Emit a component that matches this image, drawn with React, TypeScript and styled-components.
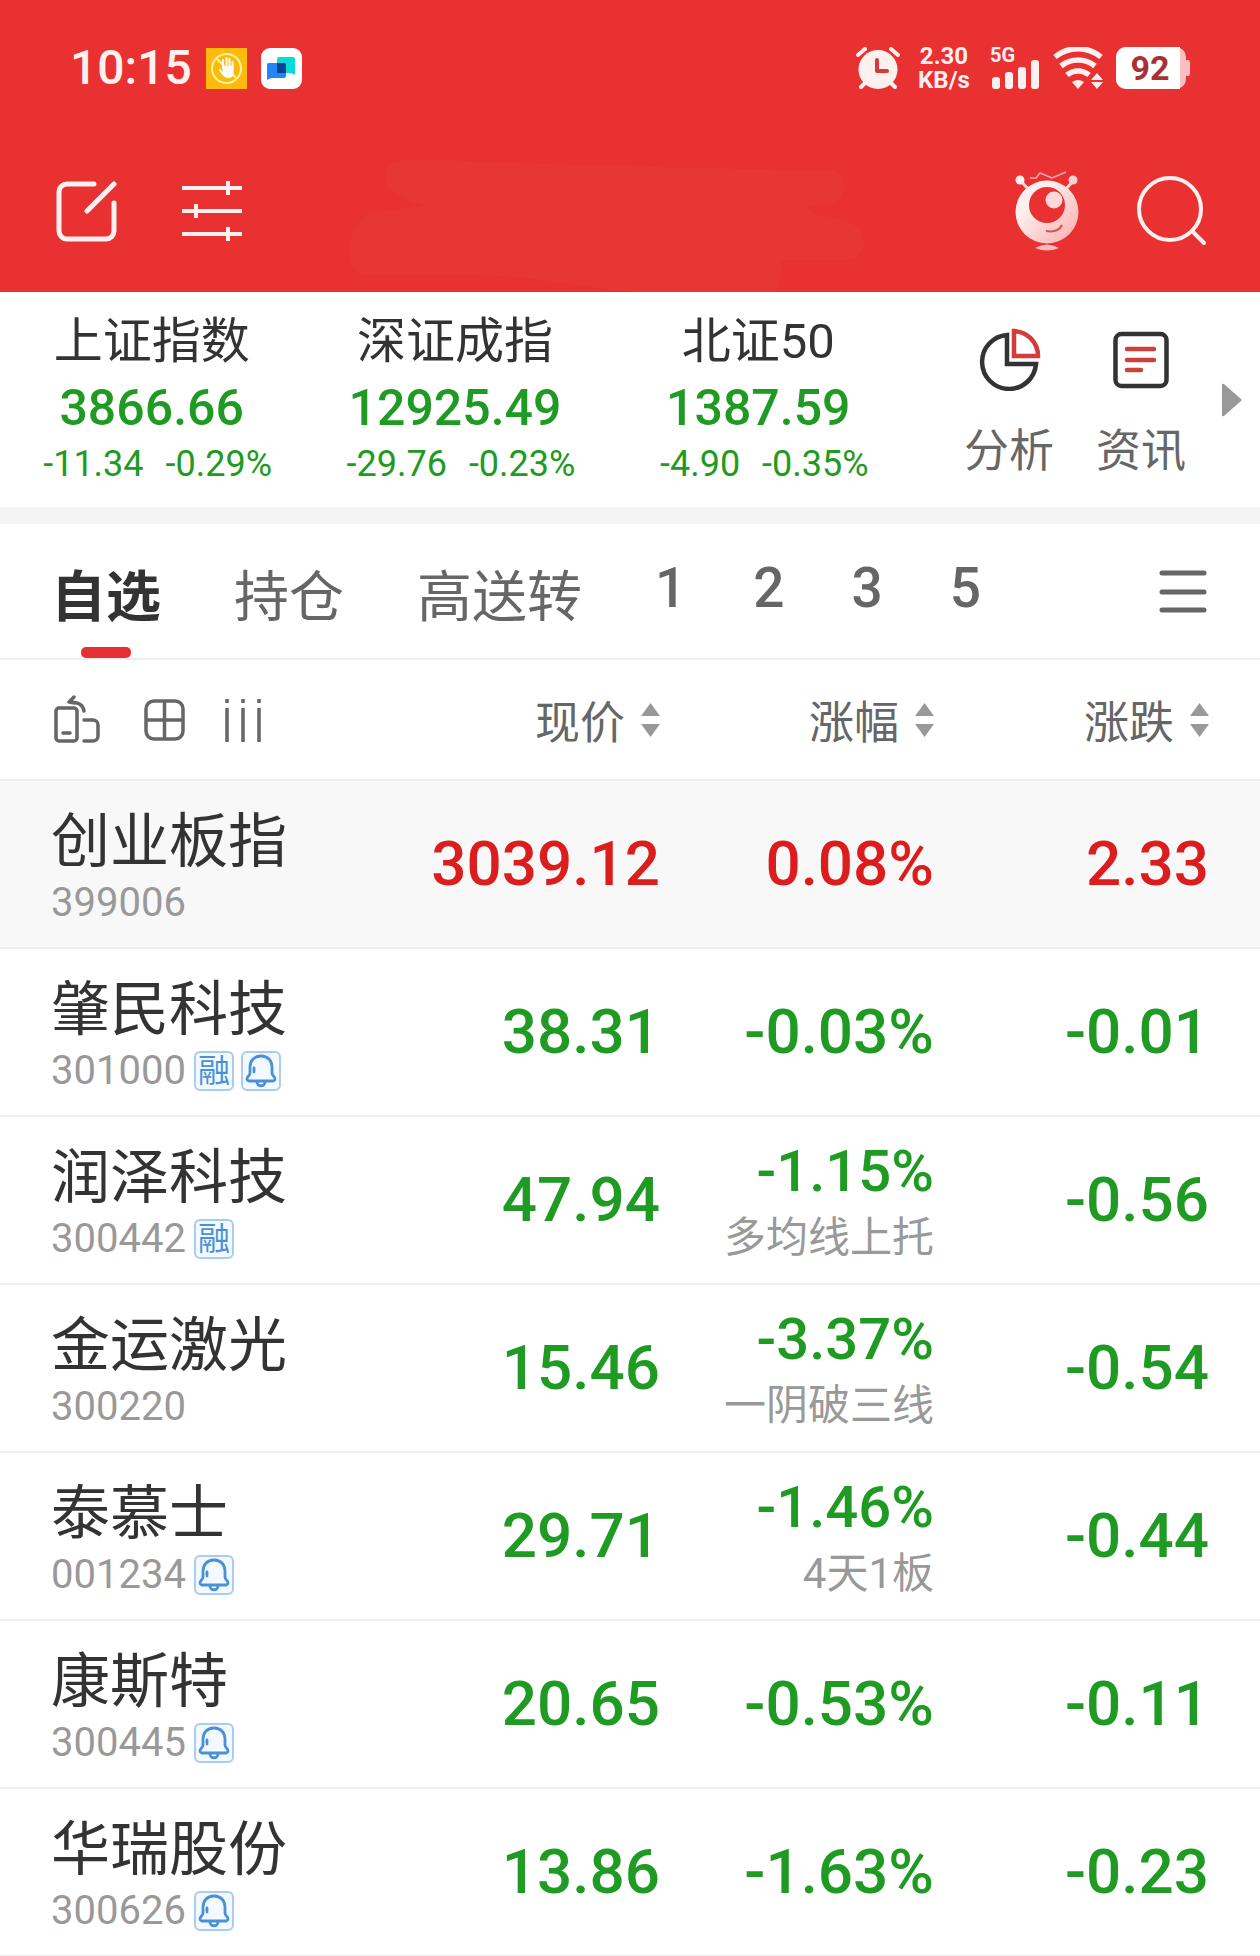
import React from 'react';
import styled, { createGlobalStyle } from 'styled-components';

const Global = createGlobalStyle`
  * { box-sizing: border-box; }
  body { margin: 0; background: #fff; font-family: 'Noto Sans CJK SC', 'Noto Sans', sans-serif; color: #333; }
  button { border: 0; padding: 0; background: none; font: inherit; color: inherit; cursor: pointer; }
  svg { display: block; flex: none; }
`;

const NUMERIC = "Roboto, 'Noto Sans CJK SC', sans-serif";
const RED = '#e83130';
const UP = '#dc1d1d';
const DOWN = '#1f9a22';

const Header = styled.header`
  position: relative;
  background: ${RED};
  color: #fff0f0;
  font-family: ${NUMERIC};
`;
const HeaderGlow = styled.svg`
  position: absolute;
  left: 50%;
  bottom: 0;
  margin-left: -290px;
  pointer-events: none;
`;
const StatusBar = styled.div`
  height: 136px;
  padding: 0 70px;
  display: flex;
  align-items: center;
  justify-content: space-between;
`;
const StatusGroup = styled.div<{ $gap: number }>`
  display: flex;
  align-items: center;
  gap: ${p => p.$gap}px;
`;
const Clock = styled.time`
  font-size: 48px;
  line-height: 48px;
  font-weight: 500;
`;
const Speed = styled.div`
  width: 52px;
  margin: 0 8px 0 6px;
  font-size: 24px;
  line-height: 24px;
  font-weight: 700;
  text-align: center;
`;
const Network = styled.div`
  position: relative;
  width: 50px;
  height: 42px;
`;
const NetworkLabel = styled.span`
  position: absolute;
  left: 0;
  top: -2px;
  font-size: 20px;
  line-height: 20px;
  font-weight: 700;
`;
const Battery = styled.div`
  position: relative;
  width: 74px;
  height: 42px;
`;
const BatteryLabel = styled.span`
  position: absolute;
  left: 0;
  top: 0;
  width: 68px;
  text-align: center;
  font-size: 34px;
  line-height: 42px;
  font-weight: 700;
  color: #a83232;
`;
const Toolbar = styled.nav`
  position: relative;
  height: 156px;
  padding: 0 53px 6px 56px;
  display: flex;
  align-items: center;
  justify-content: space-between;
`;
const ToolGroup = styled.div<{ $gap: number }>`
  display: flex;
  align-items: center;
  gap: ${p => p.$gap}px;
`;

const Indices = styled.section`
  height: 232px;
  border-bottom: 17px solid #f4f4f4;
  display: flex;
  align-items: flex-start;
  padding-right: 18px;
`;
const IndexList = styled.div`
  flex: 1;
  display: grid;
  grid-template-columns: repeat(3, 1fr);
  padding-right: 54px;
  font-family: ${NUMERIC};
`;
const IndexCard = styled.div`
  display: flex;
  flex-direction: column;
  align-items: center;
  padding-top: 20px;
  white-space: nowrap;
`;
const IndexName = styled.div`
  font-size: 49px;
  line-height: 60px;
`;
const IndexValue = styled.div`
  font-size: 50px;
  line-height: 72px;
  font-weight: 500;
  color: ${DOWN};
`;
const IndexChange = styled.div`
  display: flex;
  gap: 22px;
  padding-left: 12px;
  font-size: 36px;
  line-height: 40px;
  color: ${DOWN};
`;
const Shortcuts = styled.div`
  display: flex;
  padding-top: 35px;
  gap: 42px;
  margin-right: 36px;
`;
const Shortcut = styled.button`
  display: flex;
  flex-direction: column;
  align-items: center;
  gap: 27px;
  font-size: 45px;
  line-height: 60px;
  color: #666;
`;
const NextButton = styled.button`
  align-self: center;
`;

const Tabs = styled.nav`
  height: 136px;
  padding: 0 53px 0 51px;
  border-bottom: 2px solid #eee;
  display: flex;
  justify-content: space-between;
  align-items: center;
`;
const TabList = styled.div`
  align-self: stretch;
  display: flex;
  gap: 73px;
`;
const Tab = styled.button<{ $active?: boolean }>`
  position: relative;
  font-size: 55px;
  line-height: 80px;
  padding-top: 2px;
  color: ${p => (p.$active ? '#333' : '#666')};
  font-weight: ${p => (p.$active ? 700 : 400)};
  &::after {
    content: '';
    display: ${p => (p.$active ? 'block' : 'none')};
    position: absolute;
    left: 50%;
    bottom: 0;
    width: 50px;
    height: 11px;
    margin-left: -25px;
    border-radius: 5px;
    background: #e62f33;
  }
`;
const NumberTabs = styled.div`
  display: flex;
  gap: 67px;
`;
const NumberTab = styled(Tab)`
  font-family: ${NUMERIC};
  font-weight: 500;
  padding: 0 0 6px;
`;

const Table = styled.table`
  width: 100%;
  table-layout: fixed;
  border-collapse: collapse;
`;
const NameCol = styled.col``;
const PriceCol = styled.col`
  width: 240px;
`;
const RateCol = styled.col`
  width: 274px;
`;
const DiffCol = styled.col`
  width: 326px;
`;
const HeadRow = styled.tr`
  height: 120px;
  border-bottom: 2px solid #eee;
`;
const HeadCell = styled.th<{ $end?: boolean }>`
  padding: 0 ${p => (p.$end ? 51 : 0)}px 0 0;
  font-weight: 400;
`;
const ViewTools = styled.div`
  display: flex;
  align-items: center;
  gap: 40px;
  padding-left: 54px;
`;
const SortButton = styled.button`
  display: flex;
  width: 100%;
  align-items: center;
  justify-content: flex-end;
  gap: 16px;
  font-size: 45px;
  line-height: 62px;
  color: #666;
`;
const Row = styled.tr<{ $tinted?: boolean }>`
  height: 168px;
  border-bottom: 2px solid #eee;
  background: ${p => (p.$tinted ? '#f8f8f8' : '#fff')};
`;
const NameCell = styled.th`
  padding: 0 0 0 51px;
  text-align: left;
  font-weight: 400;
  white-space: nowrap;
`;
const StockName = styled.div`
  font-size: 59px;
  line-height: 72px;
  margin-bottom: 6px;
`;
const CodeLine = styled.div`
  display: flex;
  align-items: center;
  height: 48px;
  gap: 7px;
`;
const Code = styled.span`
  margin-right: 1px;
  font-family: ${NUMERIC};
  font-size: 40px;
  line-height: 48px;
  color: #999;
`;
const Badge = styled.span`
  width: 40px;
  height: 40px;
  display: flex;
  align-items: center;
  justify-content: center;
  border: 2px solid #a9cdf0;
  border-radius: 6px;
  background: #f3faff;
  color: #4a90d9;
  font-family: ${NUMERIC};
  font-size: 32px;
  line-height: 42px;
`;
const NumCell = styled.td<{ $up?: boolean; $end?: boolean }>`
  padding: 0 ${p => (p.$end ? 51 : 0)}px 0 0;
  text-align: right;
  white-space: nowrap;
  font-family: ${NUMERIC};
  font-size: 62px;
  line-height: 80px;
  font-weight: 500;
  color: ${p => (p.$up ? UP : DOWN)};
`;
const RateWithNote = styled.div`
  padding-top: 8px;
  font-size: 58px;
  line-height: 68px;
`;
const Note = styled.div`
  font-size: 42px;
  line-height: 66px;
  font-weight: 400;
  color: #999;
`;

const SortIcon = () => (
  <svg width="19" height="34" viewBox="0 0 19 34" fill="#999"><path d="M9.500 0 19 13H0zM9.500 34 19 21H0z" /></svg>
);
const Bell = () => (
  <svg width="32" height="34" viewBox="0 0 32 34" fill="none" stroke="#4a90d9" strokeWidth="2.800" strokeLinecap="round" strokeLinejoin="round">
    <path d="M16 2C9 2 5 7 5 13v6c0 3-3 3-3 6 0 1 1 2 2 2h24c1 0 2-1 2-2 0-3-3-3-3-6v-6c0-6-4-11-11-11zM12 28c0 5 8 5 8 0M9 14v4" />
  </svg>
);

type Stock = { name: string; code: string; margin?: boolean; bell?: boolean; price: string; rate: string; diff: string; note?: string; up?: boolean };
const stocks: Stock[] = [
  { name: '创业板指', code: '399006', price: '3039.12', rate: '0.08%', diff: '2.33', up: true },
  { name: '肇民科技', code: '301000', margin: true, bell: true, price: '38.31', rate: '-0.03%', diff: '-0.01' },
  { name: '润泽科技', code: '300442', margin: true, price: '47.94', rate: '-1.15%', diff: '-0.56', note: '多均线上托' },
  { name: '金运激光', code: '300220', price: '15.46', rate: '-3.37%', diff: '-0.54', note: '一阴破三线' },
  { name: '泰慕士', code: '001234', bell: true, price: '29.71', rate: '-1.46%', diff: '-0.44', note: '4天1板' },
  { name: '康斯特', code: '300445', bell: true, price: '20.65', rate: '-0.53%', diff: '-0.11' },
  { name: '华瑞股份', code: '300626', bell: true, price: '13.86', rate: '-1.63%', diff: '-0.23' },
];
const indices = [
  { name: '上证指数', value: '3866.66', diff: '-11.34', rate: '-0.29%' },
  { name: '深证成指', value: '12925.49', diff: '-29.76', rate: '-0.23%' },
  { name: '北证50', value: '1387.59', diff: '-4.90', rate: '-0.35%' },
];

export default function App() {
  return (
    <>
      <Global />
      <Header>
        <HeaderGlow width="530" height="142" viewBox="0 0 530 142" fill="#e83733" aria-hidden="true">
          <path d="M60 10C120 8 160 16 490 20Q504 22 504 38 502 54 484 54L466 56Q470 66 492 67 522 72 524 92 522 110 506 110H442Q440 132 436 142H300C240 138 200 126 130 125H24Q8 122 10 98 12 68 34 62L84 56C50 44 46 36 46 26Q48 12 60 10z" />
        </HeaderGlow>
        <StatusBar>
          <StatusGroup $gap={14}>
            <Clock>10:15</Clock>
            <svg width="41" height="41" viewBox="0 0 41 41">
              <rect width="41" height="41" fill="#fcba0c" />
              <circle cx="20.500" cy="20.500" r="14.500" fill="none" stroke="#fff3a0" strokeWidth="2" />
              <path d="M10 10 31 31" stroke="#fff3a0" strokeWidth="2" />
              <path d="M17 20v-8M20.500 19V10M23.500 19v-8M26.500 21v-7M14 22l4 5" stroke="#fff" strokeWidth="2" strokeLinecap="round" />
              <path d="M16 18h11.500v6c0 4-2 6-5 6-4 0-6-3-9-7 1-1 2-1 3.500 1z" fill="#fff" />
            </svg>
            <svg width="41" height="41" viewBox="0 0 41 41">
              <rect width="41" height="41" rx="9" fill="#fff" />
              <path d="M18 9h14a2 2 0 0 1 2 2v16l-4-2H16V11a2 2 0 0 1 2-2z" fill="#0bdadd" />
              <path d="M7 15h16a2 2 0 0 1 2 2v11a2 2 0 0 1-2 2H10l-4 2V16z" fill="#2485fa" />
              <path d="M16 15h7a2 2 0 0 1 2 2v8h-9z" fill="#00458d" />
            </svg>
          </StatusGroup>
          <StatusGroup $gap={12}>
            <svg width="44" height="42" viewBox="0 0 44 42">
              <circle cx="22" cy="22.500" r="19.500" fill="#fff0f0" />
              <path d="M2 8 9 2M42 8 35 2M5 40l5-5M39 40l-5-5" stroke="#fff0f0" strokeWidth="4" strokeLinecap="round" />
              <path d="M21 13v11h10" fill="none" stroke="#d83a3a" strokeWidth="4" strokeLinecap="round" strokeLinejoin="round" />
            </svg>
            <Speed>2.30<br />KB/s</Speed>
            <Network>
              <svg width="50" height="42" viewBox="0 0 50 42" fill="#fff0f0">
                <rect x="2" y="30" width="8" height="12" rx="3" /><rect x="15" y="25" width="8" height="17" rx="3" />
                <rect x="28" y="20" width="8" height="22" rx="3" /><rect x="41" y="13" width="8" height="29" rx="3" />
              </svg>
              <NetworkLabel>5G</NetworkLabel>
            </Network>
            <svg width="52" height="42" viewBox="0 0 52 42">
              <path d="M3 10a36 36 0 0 1 46 0M9 19a27 27 0 0 1 34 0M15 28a17 17 0 0 1 22 0" fill="none" stroke="#fff0f0" strokeWidth="5.500" />
              <path d="M20 35q6-4 12 0l-6 7z" fill="#fff0f0" />
              <path d="m45 26 6 7H39zM45 42l6-7H39z" fill="#fff0f0" />
            </svg>
            <Battery>
              <svg width="74" height="42" viewBox="0 0 74 42">
                <rect width="70" height="42" rx="10" fill="#f9bfc0" /><rect x="69" y="13" width="5" height="16" rx="2" fill="#f9bfc0" />
                <path d="M10 0h54v42H10A10 10 0 0 1 0 32V10A10 10 0 0 1 10 0z" fill="#fff" />
              </svg>
              <BatteryLabel>92</BatteryLabel>
            </Battery>
          </StatusGroup>
        </StatusBar>
        <Toolbar>
          <ToolGroup $gap={64}>
            <button aria-label="编辑">
              <svg width="61" height="62" viewBox="0 0 61 62" fill="none" stroke="#fff0f0" strokeWidth="5" strokeLinecap="round">
                <path d="M38 4H11a8 8 0 0 0-8 8v39a8 8 0 0 0 8 8h39a8 8 0 0 0 8-8V23M58 4 31 31" />
              </svg>
            </button>
            <button aria-label="设置">
              <svg width="62" height="62" viewBox="0 0 62 62" stroke="#fff0f0" strokeWidth="4">
                <path d="M1 8h60M1 31h60M1 54h60M47 1v14M15 24v14M47 47v14" />
              </svg>
            </button>
          </ToolGroup>
          <ToolGroup $gap={58}>
            <button aria-label="助手">
              <svg width="64" height="80" viewBox="0 0 64 80">
                <defs><linearGradient id="g" x1="0" y1="0" x2="1" y2="1"><stop offset="0.300" stopColor="#fff0f0" /><stop offset="1" stopColor="#f9aaaa" /></linearGradient></defs>
                <path d="M5 9l9 10M59 9l-9 10" stroke="#fbdada" strokeWidth="3" />
                <circle cx="5" cy="9" r="4.500" fill="#fff0f0" /><circle cx="58" cy="9" r="4.500" fill="#fbd0d0" />
                <circle cx="32" cy="41" r="31.500" fill="url(#g)" />
                <path d="M15 7h6l4-5 12 5 14-6" fill="none" stroke="#f9aaaa" strokeWidth="1.500" />
                <circle cx="32" cy="34" r="18" fill={RED} /><circle cx="39" cy="29" r="8.500" fill="#fcd8d8" />
                <path d="M31 60q12 2 16-6" fill="none" stroke="#d95050" strokeWidth="2" />
                <path d="M20 77q12-7 24 0-12 5-24 0z" fill="#f9bcbc" />
              </svg>
            </button>
            <button aria-label="搜索">
              <svg width="70" height="70" viewBox="0 0 70 70" fill="none" stroke="#fff0f0" strokeLinecap="round">
                <circle cx="33" cy="33" r="31" strokeWidth="4" /><path d="m55 55 12 12" strokeWidth="4" />
              </svg>
            </button>
          </ToolGroup>
        </Toolbar>
      </Header>

      <Indices>
        <IndexList>
          {indices.map(i => (
            <IndexCard key={i.name}>
              <IndexName>{i.name}</IndexName>
              <IndexValue>{i.value}</IndexValue>
              <IndexChange><span>{i.diff}</span><span>{i.rate}</span></IndexChange>
            </IndexCard>
          ))}
        </IndexList>
        <Shortcuts>
          <Shortcut>
            <svg width="64" height="64" viewBox="0 0 64 64" fill="none" strokeWidth="4.500">
              <path d="M30 8A27 27 0 1 0 59 37H30z" stroke="#333" />
              <path d="M37 4v25h24A25 25 0 0 0 37 4z" stroke="#d43c3c" />
            </svg>
            分析
          </Shortcut>
          <Shortcut>
            <svg width="56" height="64" viewBox="0 0 56 64" fill="none" strokeWidth="4.500" strokeLinecap="round">
              <rect x="2.500" y="7" width="51" height="52" rx="6" stroke="#333" />
              <path d="M14 22h27M14 33h27M14 43h14" stroke="#cc4040" />
            </svg>
            资讯
          </Shortcut>
        </Shortcuts>
        <NextButton aria-label="更多">
          <svg width="20" height="34" viewBox="0 0 20 34" fill="#999"><path d="M0 2Q0 0 2 1l17 15q1 1 0 2L2 33q-2 1-2-1z" /></svg>
        </NextButton>
      </Indices>

      <Tabs>
        <TabList>
          <Tab $active>自选</Tab>
          <Tab>持仓</Tab>
          <Tab>高送转</Tab>
          <NumberTabs>
            {['1', '2', '3', '5'].map(n => <NumberTab key={n}>{n}</NumberTab>)}
          </NumberTabs>
        </TabList>
        <button aria-label="菜单">
          <svg width="48" height="50" viewBox="0 0 48 50" stroke="#666" strokeWidth="5" strokeLinecap="round"><path d="M3 7h42M3 26h42M3 44h42" /></svg>
        </button>
      </Tabs>

      <Table>
        <colgroup><NameCol /><PriceCol /><RateCol /><DiffCol /></colgroup>
        <thead>
          <HeadRow>
            <HeadCell>
              <ViewTools>
                <button aria-label="横屏">
                  <svg width="50" height="50" viewBox="0 0 50 50" fill="none" stroke="#666" strokeWidth="3.500" strokeLinecap="round" strokeLinejoin="round">
                    <rect x="2" y="13" width="21" height="33" rx="3" /><path d="M9 38h7M30 25h9a5 5 0 0 1 5 5v11a5 5 0 0 1-5 5h-9M30 16C29 9 24 7 16 7M20 2l-5 5 6 1" />
                  </svg>
                </button>
                <button aria-label="宫格">
                  <svg width="41" height="42" viewBox="0 0 41 42" fill="none" stroke="#666" strokeWidth="3.500"><rect x="2" y="2" width="37" height="38" rx="8" /><path d="M20.500 2v38M2 21h37" /></svg>
                </button>
                <button aria-label="列设置">
                  <svg width="38" height="44" viewBox="0 0 38 44" stroke="#666" strokeWidth="3.500"><path d="M2 1v4M18 1v4M34 1v4M2 10v34M18 10v34M34 10v34" /></svg>
                </button>
              </ViewTools>
            </HeadCell>
            <HeadCell><SortButton>现价<SortIcon /></SortButton></HeadCell>
            <HeadCell><SortButton>涨幅<SortIcon /></SortButton></HeadCell>
            <HeadCell $end><SortButton>涨跌<SortIcon /></SortButton></HeadCell>
          </HeadRow>
        </thead>
        <tbody>
          {stocks.map(s => (
            <Row key={s.code} $tinted={s.up}>
              <NameCell scope="row">
                <StockName>{s.name}</StockName>
                <CodeLine>
                  <Code>{s.code}</Code>
                  {s.margin && <Badge>融</Badge>}
                  {s.bell && <Badge><Bell /></Badge>}
                </CodeLine>
              </NameCell>
              <NumCell $up={s.up}>{s.price}</NumCell>
              <NumCell $up={s.up}>
                {s.note ? <><RateWithNote>{s.rate}</RateWithNote><Note>{s.note}</Note></> : s.rate}
              </NumCell>
              <NumCell $up={s.up} $end>{s.diff}</NumCell>
            </Row>
          ))}
        </tbody>
      </Table>
    </>
  );
}
